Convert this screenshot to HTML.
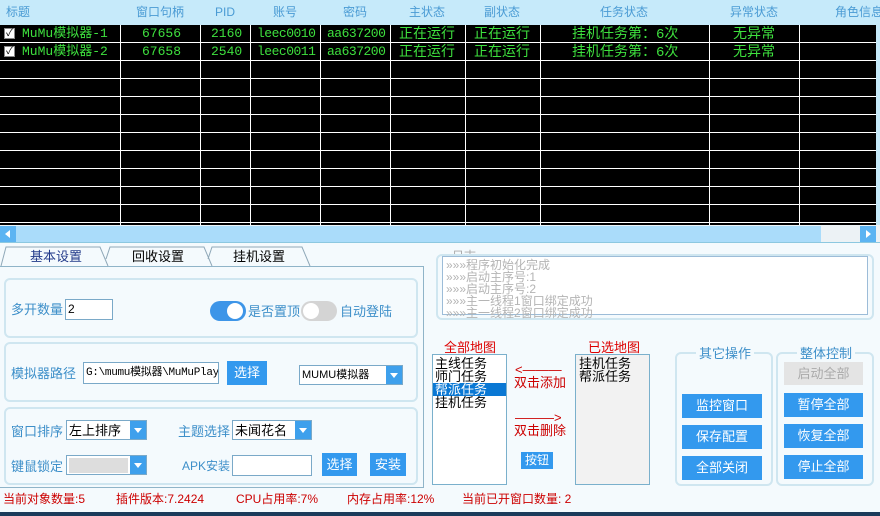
<!DOCTYPE html>
<html><head><meta charset="utf-8"><style>
*{margin:0;padding:0;box-sizing:border-box}
body{width:880px;height:516px;overflow:hidden;background:#f4fafd;font-family:"Liberation Sans","Noto Sans CJK SC",sans-serif;font-size:12px;position:relative;line-height:15px}
.a{position:absolute;white-space:nowrap}
#hdr{left:0;top:0;width:880px;height:25px;background:#c6eafa;color:#4a9bd4;font-size:12px}
#grid{left:0;top:25px;width:876px;height:200px;background:#000;
background-image:repeating-linear-gradient(to bottom,transparent 0,transparent 17px,#fff 17px,#fff 18px)}
.v{position:absolute;top:25px;width:1px;height:200px;background:#fff}
.g{color:#3ee03e;font-size:13px;line-height:17px;font-family:"Liberation Mono","Noto Sans CJK SC",monospace}
.c{font-size:14px;line-height:17px}
.gb{position:absolute;border:2px solid #cfe6f0;border-radius:6px}
.lbl{color:#3d8fc9;font-size:13px}
.btn{position:absolute;background:#3399ee;color:#fff;font-size:13px;text-align:center}
.inp{position:absolute;background:#fff;border:1px solid #7aa9c8;font-size:12px;white-space:nowrap}
.red{color:#c00;font-size:12px}
.cmb{position:absolute;background:#fff;border:1px solid #7aa9c8}
.cmb i{position:absolute;right:0;top:0;bottom:0;width:16px;background:#3ea0ec}
.cmb i:after{content:"";position:absolute;left:4px;top:7px;border:4px solid transparent;border-top:5px solid #fff}
</style></head><body>
<div id="hdr" class="a">
<span class="a" style="left:6px;top:5px">标题</span>
<span class="a" style="left:136px;top:5px">窗口句柄</span>
<span class="a" style="left:215px;top:5px">PID</span>
<span class="a" style="left:273px;top:5px">账号</span>
<span class="a" style="left:343px;top:5px">密码</span>
<span class="a" style="left:409px;top:5px">主状态</span>
<span class="a" style="left:484px;top:5px">副状态</span>
<span class="a" style="left:600px;top:5px">任务状态</span>
<span class="a" style="left:730px;top:5px">异常状态</span>
<span class="a" style="left:835px;top:5px">角色信息</span>
</div>
<div id="grid" class="a"></div>
<div class="v" style="left:120px"></div><div class="v" style="left:200px"></div><div class="v" style="left:250px"></div><div class="v" style="left:320px"></div><div class="v" style="left:390px"></div><div class="v" style="left:465px"></div><div class="v" style="left:540px"></div><div class="v" style="left:709px"></div><div class="v" style="left:799px"></div><div class="v" style="left:876px;width:4px;background:#c6eafa"></div>
<div class="a" style="left:4px;top:28px;width:11px;height:11px;background:#fff;border:1px solid #888;font-size:10px;line-height:9px;text-align:center">✓</div>
<div class="a" style="left:4px;top:46px;width:11px;height:11px;background:#fff;border:1px solid #888;font-size:10px;line-height:9px;text-align:center">✓</div>
<div class="a g" style="left:22px;top:25px">MuMu模拟器-1</div>
<div class="a g" style="left:22px;top:43px">MuMu模拟器-2</div>
<div class="a g" style="left:142px;top:25px">67656</div><div class="a g" style="left:142px;top:43px">67658</div>
<div class="a g" style="left:211px;top:25px">2160</div><div class="a g" style="left:211px;top:43px">2540</div>
<div class="a g" style="left:257px;top:25px;letter-spacing:-0.5px">leec0010</div><div class="a g" style="left:257px;top:43px;letter-spacing:-0.5px">leec0011</div>
<div class="a g" style="left:327px;top:25px;letter-spacing:-0.5px">aa637200</div><div class="a g" style="left:327px;top:43px;letter-spacing:-0.5px">aa637200</div>
<div class="a g c" style="left:399px;top:27px">正在运行</div><div class="a g c" style="left:399px;top:45px">正在运行</div>
<div class="a g c" style="left:474px;top:27px">正在运行</div><div class="a g c" style="left:474px;top:45px">正在运行</div>
<div class="a g c" style="left:572px;top:27px">挂机任务第：6次</div><div class="a g c" style="left:572px;top:45px">挂机任务第：6次</div>
<div class="a g c" style="left:733px;top:27px">无异常</div><div class="a g c" style="left:733px;top:45px">无异常</div>
<div class="a" style="left:0;top:225px;width:880px;height:17px;background:#ecf2f5"></div>
<div class="a" style="left:16px;top:226px;width:805px;height:16px;background:#aadcfa"></div>
<div class="a" style="left:0;top:226px;width:16px;height:16px;background:#5cb4f2"></div>
<div class="a" style="left:5px;top:230px;border:4px solid transparent;border-right:5px solid #fff;border-left:0"></div>
<div class="a" style="left:860px;top:226px;width:16px;height:16px;background:#5cb4f2"></div>
<div class="a" style="left:866px;top:230px;border:4px solid transparent;border-left:5px solid #fff;border-right:0"></div>
<div class="a" style="left:0;top:242px;width:880px;height:1px;background:#8cc8e0"></div>
<div class="a" style="left:0;top:266px;width:424px;height:222px;border:1px solid #8fb4c8;border-left:0;background:#f4fafd"></div>
<svg class="a" style="left:0;top:245px" width="320" height="22"><path d="M1 21 L6 2 L100 2 L108 21 M106 14 L110 2 L204 2 L212 21 M208 14 L212 2 L302 2 L310 21" fill="#f4fafd" stroke="#8fa8b8"/></svg>
<div class="a" style="left:30px;top:249px;color:#223a8a;font-size:13px">基本设置</div>
<div class="a" style="left:132px;top:249px;font-size:13px">回收设置</div>
<div class="a" style="left:233px;top:249px;font-size:13px">挂机设置</div>
<div class="gb" style="left:4px;top:278px;width:414px;height:60px"></div>
<div class="gb" style="left:4px;top:342px;width:414px;height:60px"></div>
<div class="gb" style="left:4px;top:407px;width:414px;height:78px"></div>
<div class="a lbl" style="left:11px;top:302px">多开数量</div>
<div class="inp" style="left:65px;top:299px;width:48px;height:21px;padding-left:2px;line-height:19px">2</div>
<div class="a" style="left:210px;top:301px;width:36px;height:20px;border-radius:10px;background:#3d95e8"></div>
<div class="a" style="left:227px;top:303px;width:16px;height:16px;border-radius:8px;background:#fff"></div>
<div class="a lbl" style="left:248px;top:304px">是否置顶</div>
<div class="a" style="left:301px;top:301px;width:36px;height:20px;border-radius:10px;background:#d4d4d4"></div>
<div class="a" style="left:303px;top:303px;width:16px;height:16px;border-radius:8px;background:#fff"></div>
<div class="a lbl" style="left:340px;top:304px">自动登陆</div>
<div class="a lbl" style="left:11px;top:366px">模拟器路径</div>
<div class="inp" style="left:83px;top:362px;width:136px;height:22px;line-height:20px;padding-left:2px;overflow:hidden;font-family:'Liberation Mono','Noto Sans CJK SC',monospace;font-size:11px;letter-spacing:-0.3px">G:\mumu模拟器\MuMuPlay</div>
<div class="btn" style="left:227px;top:361px;width:40px;height:24px;line-height:24px">选择</div>
<div class="cmb" style="left:299px;top:365px;width:104px;height:20px"><span class="a" style="left:2px;top:2px;font-size:11px">MUMU模拟器</span><i></i></div>
<div class="a lbl" style="left:11px;top:424px">窗口排序</div>
<div class="cmb" style="left:66px;top:420px;width:81px;height:20px"><span class="a" style="left:2px;top:2px;font-size:13px">左上排序</span><i></i></div>
<div class="a lbl" style="left:178px;top:424px">主题选择</div>
<div class="cmb" style="left:232px;top:420px;width:80px;height:20px"><span class="a" style="left:2px;top:2px;font-size:13px">未闻花名</span><i></i></div>
<div class="a lbl" style="left:11px;top:459px">键鼠锁定</div>
<div class="cmb" style="left:66px;top:455px;width:81px;height:20px"><span class="a" style="left:2px;top:2px;width:59px;height:15px;background:#ddd"></span><i></i></div>
<div class="a lbl" style="left:182px;top:459px;font-size:12px">APK安装</div>
<div class="inp" style="left:232px;top:455px;width:80px;height:21px"></div>
<div class="btn" style="left:322px;top:453px;width:35px;height:23px;line-height:23px">选择</div>
<div class="btn" style="left:370px;top:453px;width:36px;height:23px;line-height:23px">安装</div>
<div class="a" style="left:452px;top:249px;color:#aaa;font-size:12px">日志</div>
<div class="a" style="left:436px;top:254px;width:438px;height:66px;border:2px solid #cfe6f0;border-radius:6px"></div>
<div class="a" style="left:442px;top:256px;width:426px;height:59px;border:1px solid #9cbcd8;background:#fff;color:#b4b4b4;font-size:12px;line-height:12px;padding:2px 3px;white-space:pre">»»»程序初始化完成
»»»启动主序号:1
»»»启动主序号:2
»»»主一线程1窗口绑定成功
»»»主一线程2窗口绑定成功</div>
<div class="a red" style="left:444px;top:340px;font-size:13px;color:#d00">全部地图</div>
<div class="a red" style="left:588px;top:340px;font-size:13px;color:#d00">已选地图</div>
<div class="a" style="left:432px;top:354px;width:75px;height:131px;background:#fff;border:1px solid #7ab0cc;font-size:13px;line-height:13px;padding-top:2px">
<div style="padding-left:2px">主线任务</div><div style="padding-left:2px">师门任务</div><div style="padding-left:2px;background:#0a78d4;color:#fff">帮派任务</div><div style="padding-left:2px">挂机任务</div></div>
<div class="a" style="left:575px;top:354px;width:75px;height:131px;background:#f2f2f2;border:1px solid #7ab0cc;font-size:13px;line-height:13px;padding:2px 0 0 3px">挂机任务<br>帮派任务</div>
<div class="a" style="left:515px;top:362px;color:#c00;font-size:13px">&lt;———</div>
<div class="a" style="left:514px;top:375px;color:#c00;font-size:13px">双击添加</div>
<div class="a" style="left:515px;top:410px;color:#c00;font-size:13px">———&gt;</div>
<div class="a" style="left:514px;top:423px;color:#c00;font-size:13px">双击删除</div>
<div class="btn" style="left:521px;top:452px;width:32px;height:17px;line-height:17px;font-size:12px">按钮</div>
<div class="gb" style="left:675px;top:352px;width:98px;height:134px"></div>
<div class="gb" style="left:776px;top:352px;width:98px;height:134px"></div>
<div class="a lbl" style="left:696px;top:346px;background:#f4fafd;padding:0 3px">其它操作</div>
<div class="a lbl" style="left:797px;top:346px;background:#f4fafd;padding:0 3px">整体控制</div>
<div class="btn" style="left:682px;top:394px;width:80px;height:24px;line-height:24px">监控窗口</div>
<div class="btn" style="left:682px;top:425px;width:80px;height:24px;line-height:24px">保存配置</div>
<div class="btn" style="left:682px;top:456px;width:80px;height:24px;line-height:24px">全部关闭</div>
<div class="btn" style="left:784px;top:362px;width:79px;height:23px;line-height:23px;background:#e4e4e4;color:#aaa">启动全部</div>
<div class="btn" style="left:784px;top:393px;width:79px;height:24px;line-height:24px">暂停全部</div>
<div class="btn" style="left:784px;top:424px;width:79px;height:24px;line-height:24px">恢复全部</div>
<div class="btn" style="left:784px;top:455px;width:79px;height:24px;line-height:24px">停止全部</div>
<div class="a red" style="left:3px;top:492px">当前对象数量:5</div>
<div class="a red" style="left:116px;top:492px">插件版本:7.2424</div>
<div class="a red" style="left:236px;top:492px">CPU占用率:7%</div>
<div class="a red" style="left:347px;top:492px">内存占用率:12%</div>
<div class="a red" style="left:462px;top:492px">当前已开窗口数量: 2</div>
<div class="a" style="left:0;top:512px;width:880px;height:4px;background:#1b3a5a"></div>
</body></html>
